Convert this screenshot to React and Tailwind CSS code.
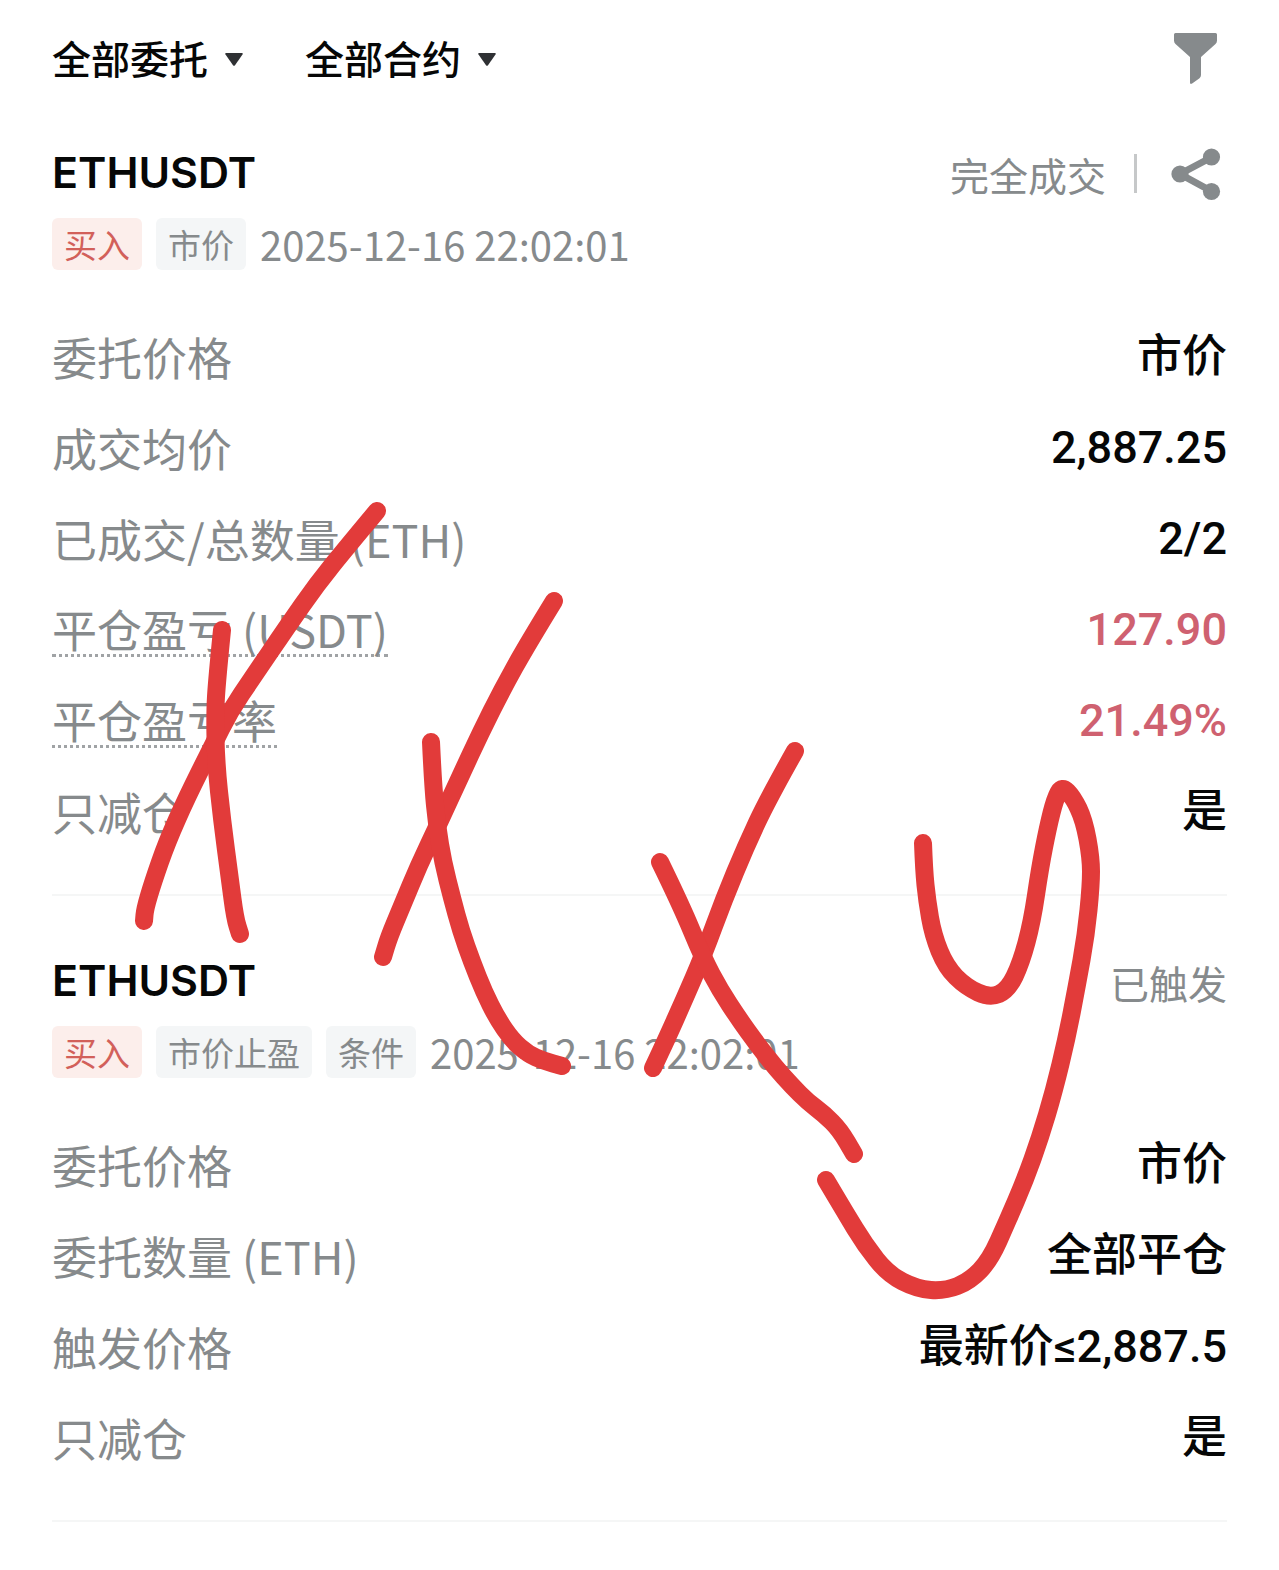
import { useState } from 'react'

const orders = [
  {
    id: 1,
    symbol: 'ETHUSDT',
    status: '完全成交',
    shareable: true,
    tags: ['市价'],
    time: '2025-12-16 22:02:01',
    rows: [
      { label: '委托价格', value: '市价' },
      { label: '成交均价', value: '2,887.25' },
      { label: '已成交/总数量 (ETH)', value: '2/2' },
      { label: '平仓盈亏 (USDT)', value: '127.90', hint: true, loss: true },
      { label: '平仓盈亏率', value: '21.49%', hint: true, loss: true },
      { label: '只减仓', value: '是' },
    ],
  },
  {
    id: 2,
    symbol: 'ETHUSDT',
    status: '已触发',
    shareable: false,
    tags: ['市价止盈', '条件'],
    time: '2025-12-16 22:02:01',
    rows: [
      { label: '委托价格', value: '市价' },
      { label: '委托数量 (ETH)', value: '全部平仓' },
      { label: '触发价格', value: '最新价≤2,887.5' },
      { label: '只减仓', value: '是' },
    ],
  },
]

// Pen strokes as lists of points
const strokes = [
  [[377, 511], [347, 547], [317, 584], [287, 627], [253, 677], [230, 711], [212, 747], [187, 797], [167, 842], [153, 882], [145, 909], [144, 921]],
  [[222, 630], [217, 680], [215, 713], [216, 763], [222, 820], [230, 880], [235, 918], [240, 934]],
  [[554, 601], [527, 645], [502, 690], [481, 732], [460, 777], [438, 825], [419, 865], [402, 906], [389, 937], [383, 957]],
  [[431, 742], [433, 785], [437, 826], [443, 862], [452, 898], [461, 931], [472, 962], [484, 992], [497, 1018], [512, 1040], [528, 1054], [544, 1061], [562, 1066]],
  [[795, 751], [768, 799], [746, 846], [724, 899], [703, 956], [684, 1000], [667, 1038], [653, 1068]],
  [[660, 862], [681, 905], [703, 958], [720, 990], [739, 1019], [757, 1044], [775, 1067], [792, 1086], [808, 1102], [824, 1114], [840, 1130], [854, 1154]],
  [[923, 843], [924, 870], [927, 900], [933, 935], [946, 967], [966, 987], [990, 998], [1008, 990], [1021, 963], [1032, 922], [1040, 868], [1048, 827], [1055, 799], [1062, 786], [1073, 797], [1084, 820], [1091, 858], [1091, 885], [1086, 935], [1077, 985], [1067, 1037], [1054, 1091], [1040, 1138], [1025, 1180], [1007, 1222], [990, 1260], [970, 1281], [945, 1291], [917, 1289], [888, 1274], [865, 1245], [845, 1212], [826, 1180]],
]

function smooth(points) {
  let d = `M${points[0].join(' ')}`
  for (let i = 1; i < points.length - 1; i++) {
    const [x, y] = points[i]
    const [nx, ny] = points[i + 1]
    d += `Q${x} ${y} ${(x + nx) / 2} ${(y + ny) / 2}`
  }
  return d + `L${points[points.length - 1].join(' ')}`
}

function Dropdown({ name, options }) {
  const [value, setValue] = useState(options[0])

  return (
    <div className="flex items-center gap-4">
      <select
        aria-label={name}
        value={value}
        onChange={e => setValue(e.target.value)}
        className="appearance-none bg-transparent pb-1 text-[39px] leading-[54px] font-medium outline-none"
      >
        {options.map(o => <option key={o}>{o}</option>)}
      </select>
      <svg viewBox="0 0 18 13" className="w-[18px] h-[13px] pointer-events-none" fill="#2f3134">
        <path d="M1.2 0H16.8Q18.4 0 17.5 1.4L10 12.2Q9 13.5 8 12.2L0.5 1.4Q-0.4 0 1.2 0Z" />
      </svg>
    </div>
  )
}

function FilterIcon() {
  return (
    <svg viewBox="0 0 56 56" className="w-14 h-14" fill="#868a8c">
      <path d="M4.500 2H44.500Q46 2 46 3.500V9.500Q46 11.500 44.500 13L30 26V44Q30 46 28.500 47.200L21.500 52.200Q19 54 19 51.500V26L4.500 13Q3 11.500 3 9.500V3.500Q3 2 4.500 2Z" />
    </svg>
  )
}

function ShareIcon() {
  return (
    <svg viewBox="0 0 56 56" className="w-14 h-14" fill="#868a8c">
      <path d="M41 11L9 28L41 45.500" fill="none" stroke="#868a8c" strokeWidth="7" />
      <circle cx="9" cy="28" r="8.600" />
      <circle cx="40.500" cy="11" r="8.600" />
      <circle cx="40.500" cy="45.500" r="8.600" />
    </svg>
  )
}

function Order({ order }) {
  return (
    <section className="pt-14 pb-[37px] border-b-2 border-[#f5f6f6]">
      <div className="flex items-center justify-between h-[59px]">
        <h2 className="pb-1 font-['Inter'] text-[43px] leading-[54px] font-semibold">{order.symbol}</h2>
        <div className="flex items-center">
          <span className="text-[39px] leading-[58px] text-[#868a8c]">{order.status}</span>
          {order.shareable && (
            <>
              <span className="w-[3px] h-[39px] ml-7 mr-[34px] bg-[#c6c8c9]" />
              <button type="button" aria-label="分享">
                <ShareIcon />
              </button>
            </>
          )}
        </div>
      </div>

      <div className="flex items-center gap-3.5 mt-[15px] text-[33px] leading-[52px]">
        <span className="px-3 rounded-md bg-[#fceeeb] text-[#d2605a]">买入</span>
        {order.tags.map(tag => (
          <span key={tag} className="px-3 rounded-md bg-[#f4f6f7] text-[#868a8c]">{tag}</span>
        ))}
        <time className="text-[40px] text-[#868a8c]">{order.time}</time>
      </div>

      <dl className="mt-[41px] text-[45px] leading-[51px]">
        {order.rows.map(row => (
          <div key={row.label} className="flex items-center justify-between h-[91px]">
            <dt className="text-[#868a8c]">
              {row.hint
                ? <span className="block border-b-3 border-dotted border-[#a0a3a5]">{row.label}</span>
                : row.label}
            </dt>
            <dd className={`font-['Roboto','Noto_Sans_CJK_SC',sans-serif] font-medium ${row.loss ? 'text-[#cf6170]' : ''}`}>
              {row.value}
            </dd>
          </div>
        ))}
      </dl>
    </section>
  )
}

// Freehand pen marks drawn over the list
function Scribble() {
  return (
    <svg
      viewBox="0 0 1279 1570"
      className="absolute top-0 left-0 w-full pointer-events-none"
      fill="none"
      stroke="#e23b3a"
      strokeWidth="18"
      strokeLinecap="round"
      strokeLinejoin="round"
    >
      {strokes.map((points, i) => <path key={i} d={smooth(points)} />)}
    </svg>
  )
}

function App() {
  return (
    <div className="relative min-h-screen bg-white text-[#060707] font-['Noto_Sans_CJK_SC',sans-serif]">
      <div className="px-[52px] pb-12">
        <header className="flex items-center justify-between pt-[30px]">
          <div className="flex items-center gap-[62px]">
            <Dropdown name="委托类型" options={['全部委托']} />
            <Dropdown name="合约" options={['全部合约']} />
          </div>
          <button type="button" aria-label="筛选">
            <FilterIcon />
          </button>
        </header>

        {orders.map(order => <Order key={order.id} order={order} />)}
      </div>

      <Scribble />
    </div>
  )
}

export default App
